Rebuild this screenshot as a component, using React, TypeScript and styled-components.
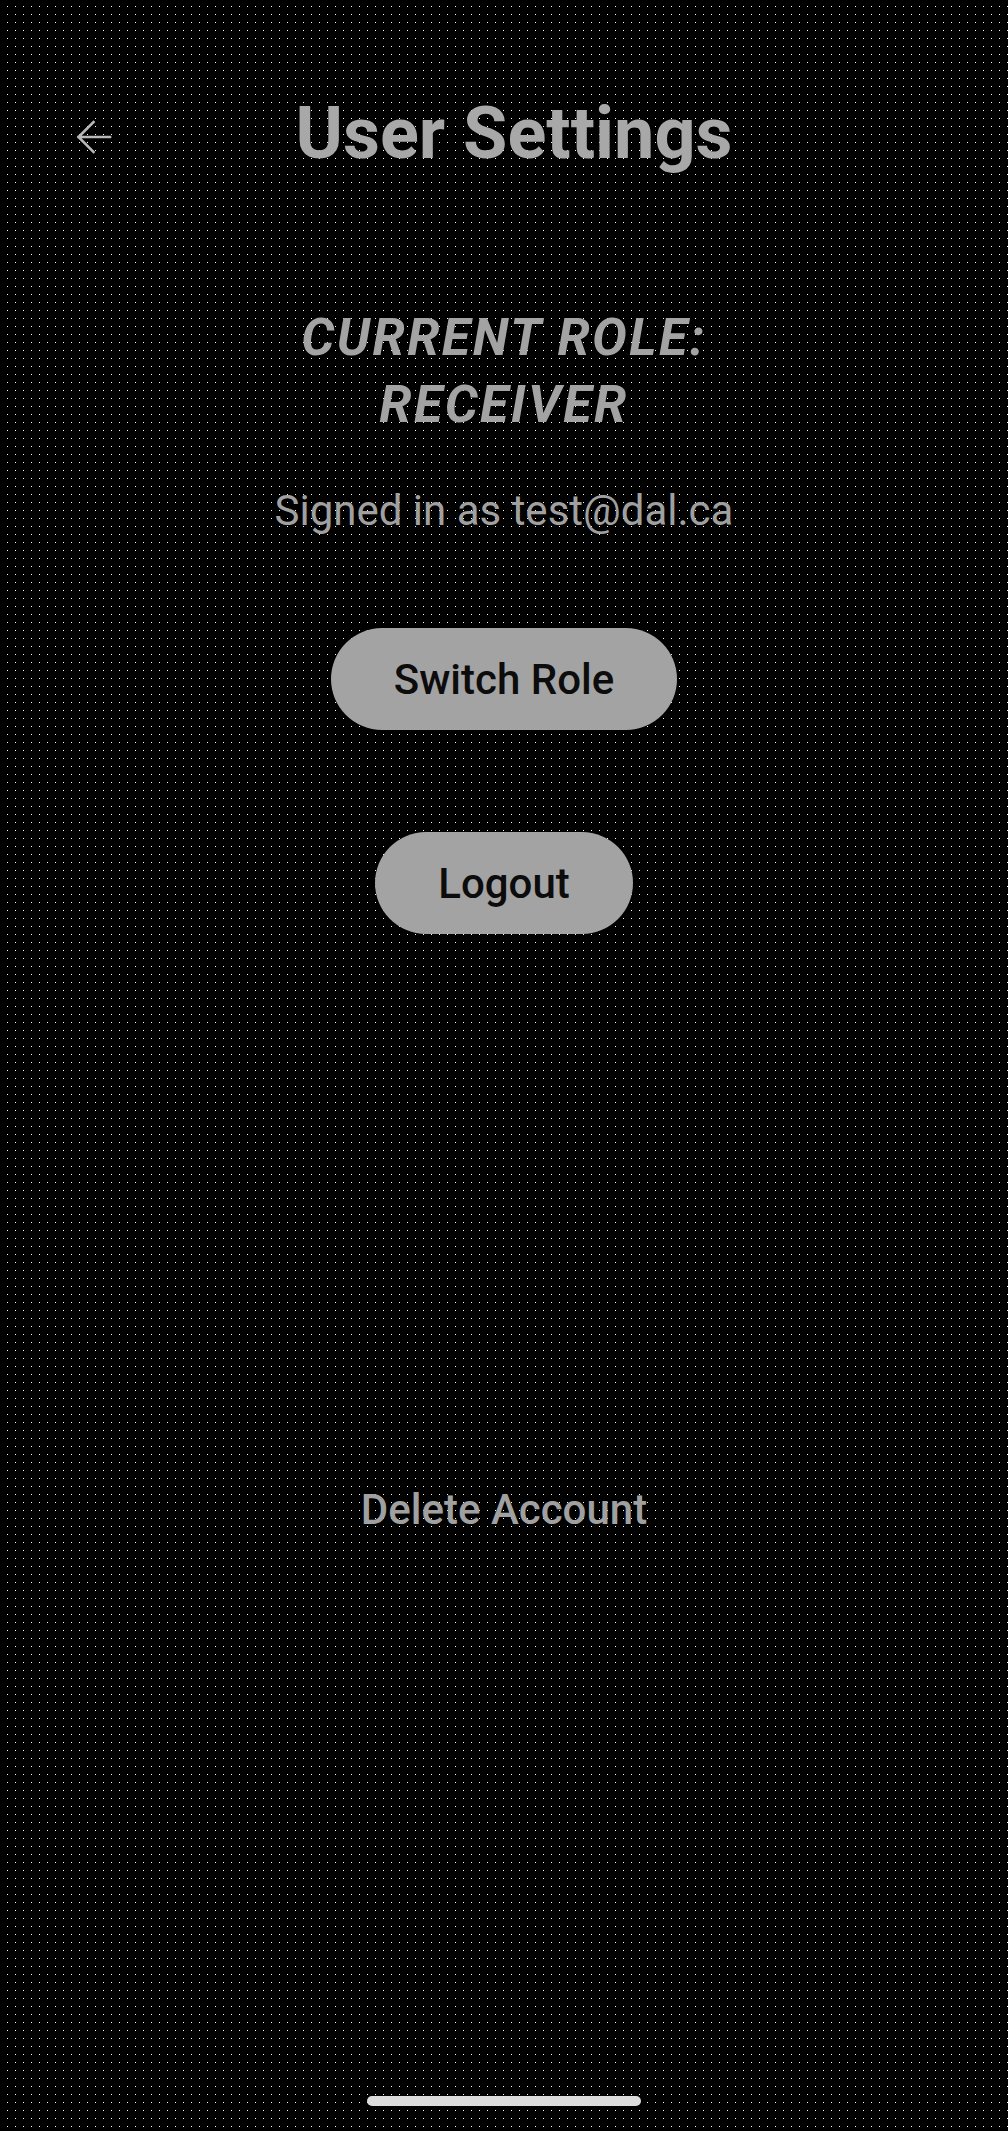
import React from "react";
import styled, { createGlobalStyle } from "styled-components";

const GlobalStyle = createGlobalStyle`
  html, body {
    margin: 0;
    padding: 0;
  }
  body {
    background-color: #000;
    background-image: conic-gradient(at 1px 1px, transparent 270deg, #ffffff 0);
    background-size: 8px 8px;
    background-position: 7px 6px;
    font-family: Roboto, "Noto Sans", "Liberation Sans", sans-serif;
    color: #a0a0a0;
  }
`;

const Screen = styled.div`
  min-height: 2131px;
  display: flex;
  flex-direction: column;
  align-items: stretch;
  box-sizing: border-box;
`;

const Header = styled.header`
  display: grid;
  grid-template-columns: 120px 1fr 100px;
  align-items: center;
  padding-top: 91px;
`;

const BackButton = styled.button`
  justify-self: start;
  margin-left: 76px;
  margin-top: 6px;
  padding: 0;
  border: 0;
  background: transparent;
  display: flex;
  align-items: center;
  justify-content: center;
  cursor: pointer;
`;

const Title = styled.h1`
  margin: 0;
  text-align: center;
  font-size: 72px;
  line-height: 86px;
  font-weight: 700;
  color: #a8a8a8;
  letter-spacing: 0;
`;

const Body = styled.main`
  display: flex;
  flex-direction: column;
  align-items: center;
  flex: 1;
`;

const RoleHeading = styled.h2`
  margin: 127px 0 0;
  text-align: center;
  font-size: 52px;
  line-height: 67px;
  font-weight: 700;
  font-style: italic;
  letter-spacing: 2.4px;
  color: #a3a3a3;
`;

const SignedIn = styled.p`
  margin: 48px 0 0;
  font-size: 42px;
  line-height: 50px;
  font-weight: 400;
  color: #a0a0a0;
`;

const PillButton = styled.button<{ $top: number }>`
  margin-top: ${(p) => p.$top}px;
  height: 102px;
  padding: 0 63px;
  border: 0;
  border-radius: 51px;
  background: #a3a3a3;
  color: #0c0c0c;
  font-family: Roboto, "Noto Sans", "Liberation Sans", sans-serif;
  font-size: 42px;
  font-weight: 500;
  letter-spacing: 0;
  cursor: pointer;
`;

const TextButton = styled.button`
  margin-top: 551px;
  padding: 0;
  border: 0;
  background: transparent;
  color: #a0a0a0;
  font-family: Roboto, "Noto Sans", "Liberation Sans", sans-serif;
  font-size: 42px;
  line-height: 49px;
  font-weight: 500;
  cursor: pointer;
`;

const HomeIndicator = styled.div`
  align-self: center;
  margin-top: auto;
  margin-bottom: 25px;
  width: 274px;
  height: 10px;
  border-radius: 5px;
  background: #dcdcdc;
`;

const BackArrow = () => (
  <svg width="36" height="34" viewBox="0 0 36 34" fill="none">
    <path
      d="M34 17H2.5M17.5 2L2.5 17L17.5 32"
      stroke="#b8b8b8"
      strokeWidth="2.6"
      strokeLinecap="square"
      strokeLinejoin="miter"
    />
  </svg>
);

export default function App() {
  return (
    <>
      <GlobalStyle />
      <Screen>
        <Header>
          <BackButton aria-label="Back">
            <BackArrow />
          </BackButton>
          <Title>User Settings</Title>
          <span />
        </Header>
        <Body>
          <RoleHeading>
            CURRENT ROLE:
            <br />
            RECEIVER
          </RoleHeading>
          <SignedIn>Signed in as test@dal.ca</SignedIn>
          <PillButton $top={92}>Switch Role</PillButton>
          <PillButton $top={102}>Logout</PillButton>
          <TextButton>Delete Account</TextButton>
        </Body>
        <HomeIndicator />
      </Screen>
    </>
  );
}
